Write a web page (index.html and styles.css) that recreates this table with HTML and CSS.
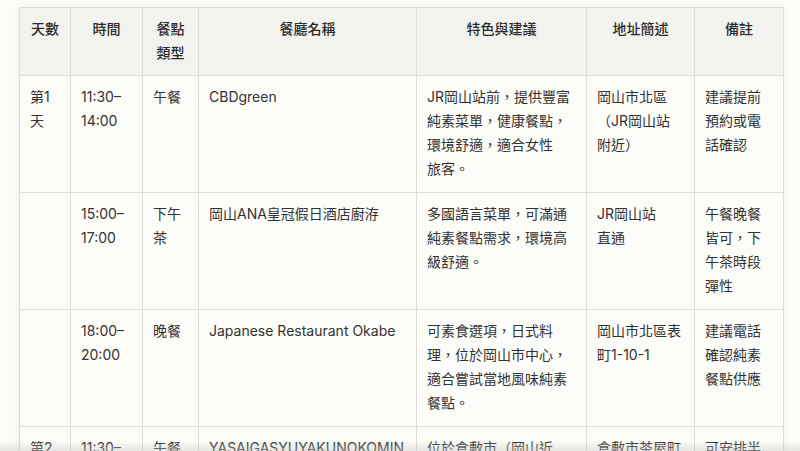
FILE: index.html
```html
<!DOCTYPE html>
<html lang="zh-Hant">
<head>
<meta charset="utf-8">
<title>餐廳行程</title>
<link rel="stylesheet" href="styles.css">
</head>
<body>
<div class="page">
  <div class="table-wrap">
    <table class="plan">
      <colgroup>
        <col class="c-day">
        <col class="c-time">
        <col class="c-type">
        <col class="c-name">
        <col class="c-feat">
        <col class="c-addr">
        <col class="c-note">
      </colgroup>
      <thead>
        <tr>
          <th>天數</th>
          <th>時間</th>
          <th>餐點類型</th>
          <th>餐廳名稱</th>
          <th>特色與建議</th>
          <th>地址簡述</th>
          <th>備註</th>
        </tr>
      </thead>
      <tbody>
        <tr>
          <td>第1天</td>
          <td>11:30–14:00</td>
          <td>午餐</td>
          <td>CBDgreen</td>
          <td>JR岡山站前，提供豐富純素菜單，健康餐點，環境舒適，適合女性<br>旅客。</td>
          <td>岡山市北區（JR岡山站<br>附近）</td>
          <td>建議提前預約或電話確認</td>
        </tr>
        <tr>
          <td></td>
          <td>15:00–17:00</td>
          <td>下午茶</td>
          <td>岡山ANA皇冠假日酒店廚洊</td>
          <td>多國語言菜單，可滿通純素餐點需求，環境高級舒適。</td>
          <td>JR岡山站<br>直通</td>
          <td>午餐晚餐皆可，下午茶時段彈性</td>
        </tr>
        <tr>
          <td></td>
          <td>18:00–20:00</td>
          <td>晚餐</td>
          <td>Japanese Restaurant Okabe</td>
          <td>可素食選項，日式料理，位於岡山市中心，適合嘗試當地風味純素餐點。</td>
          <td>岡山市北區表町1-10-1</td>
          <td>建議電話確認純素餐點供應</td>
        </tr>
        <tr>
          <td>第2天</td>
          <td>11:30–14:00</td>
          <td>午餐</td>
          <td class="clip">YASAIGASYUYAKUNOKOMIN</td>
          <td>位於倉敷市（岡山近郊），純素友善。</td>
          <td>倉敷市茶屋町</td>
          <td>可安排半日遊</td>
        </tr>
      </tbody>
    </table>
  </div>
</div>
<div class="fade-bottom"></div>
</body>
</html>
```
FILE: styles.css
```css
html, body {
  margin: 0;
  padding: 0;
  background: #fcfcf9;
}
body {
  font-family: "Inter", "Noto Sans CJK TC", sans-serif;
  font-size: 14px;
  color: #333;
  overflow: hidden;
  height: 451px;
}
.page {
  padding: 7px 17px 0 19px;
}
.table-wrap {
  box-shadow: 0 0 7px rgba(0, 0, 0, 0.07);
}
.plan {
  width: 764px;
  border-collapse: collapse;
  table-layout: fixed;
  background: #fcfcf9;
}
.c-day { width: 51px; }
.c-time { width: 72px; }
.c-type { width: 56px; }
.c-name { width: 218px; }
.c-feat { width: 170px; }
.c-addr { width: 108px; }
.c-note { width: 89px; }
.plan th,
.plan td {
  border: 1px solid #dedcd6;
  padding: 9px 10px 10px;
  line-height: 24.25px;
  vertical-align: top;
  text-align: left;
}
.plan th {
  background: #f2f2ee;
  font-weight: 500;
  text-align: center;
  color: #2c2c2c;
  padding: 9px 10px 9px;
}
.plan td.clip {
  overflow: hidden;
  white-space: nowrap;
}
.fade-bottom {
  position: fixed;
  left: 0;
  right: 0;
  bottom: 0;
  height: 10px;
  background: linear-gradient(to bottom, rgba(200, 200, 196, 0), rgba(200, 200, 196, 0.45));
  pointer-events: none;
}
```
